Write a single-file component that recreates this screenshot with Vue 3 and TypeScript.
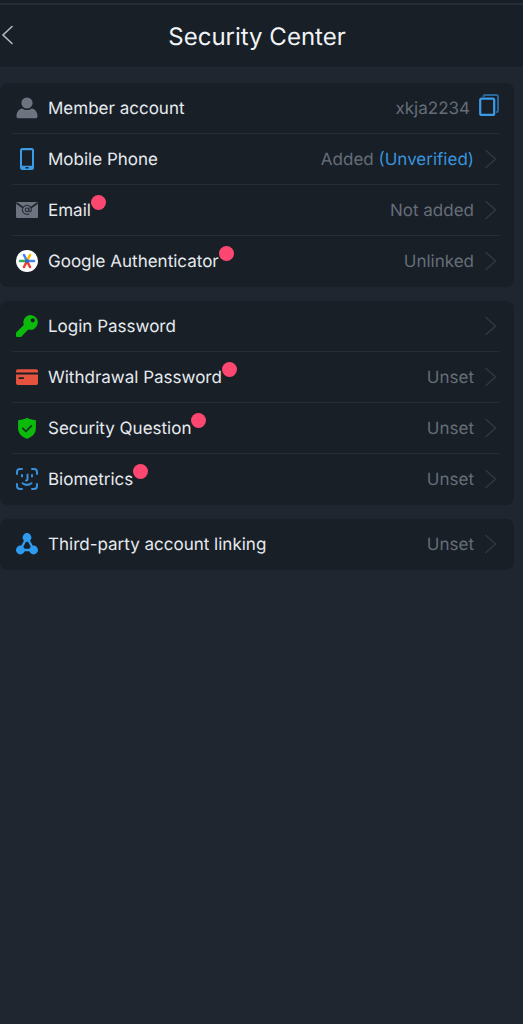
<script setup lang="ts">
type IconName = 'phone' | 'mail' | 'google' | 'key' | 'card' | 'shield' | 'face' | 'nodes'

interface Row {
  label: string
  icon: IconName
  value: string
  note?: string
  dot?: boolean
}

const account = 'xkja2234'

const accountRows: Row[] = [
  { label: 'Mobile Phone', icon: 'phone', value: 'Added', note: '(Unverified)' },
  { label: 'Email', icon: 'mail', value: 'Not added', dot: true },
  { label: 'Google Authenticator', icon: 'google', value: 'Unlinked', dot: true },
]

const groups: Row[][] = [
  accountRows,
  [
    { label: 'Login Password', icon: 'key', value: '' },
    { label: 'Withdrawal Password', icon: 'card', value: 'Unset', dot: true },
    { label: 'Security Question', icon: 'shield', value: 'Unset', dot: true },
    { label: 'Biometrics', icon: 'face', value: 'Unset', dot: true },
  ],
  [{ label: 'Third-party account linking', icon: 'nodes', value: 'Unset' }],
]

function copyAccount() {
  navigator.clipboard?.writeText(account)
}
</script>

<template>
  <div class="page">
    <header class="header">
      <button class="back" type="button" aria-label="Back">
        <svg viewBox="0 0 12 20" width="12" height="20">
          <path d="M11 1.500 2 10l9 8.500" fill="none" stroke="#b4bac1" stroke-width="1.600" stroke-linecap="round" />
        </svg>
      </button>
      <h1 class="title">Security Center</h1>
    </header>

    <main class="groups">
      <section v-for="(rows, index) in groups" :key="index" class="card">
        <div v-if="index === 0" class="row">
          <svg class="icon" viewBox="0 0 22 22">
            <circle cx="11" cy="6" r="5.600" fill="#6d7480" />
            <path d="M.5 19.500C.5 15 3 12.200 6.300 11.600c2.800 2 6.600 2 9.400 0 3.300.6 5.800 3.400 5.800 7.900 0 1.200-.7 1.800-1.800 1.800H2.300C1.200 21.300.5 20.700.5 19.500Z" fill="#6d7480" />
          </svg>
          <span class="label">Member account</span>
          <span class="value">{{ account }}</span>
          <button class="copy" type="button" aria-label="Copy member account" @click="copyAccount">
            <svg viewBox="0 0 20 22" width="20" height="22">
              <path d="M4.500 3V2.500Q4.500 1 6 1h11.500Q19 1 19 2.500v14q0 1.500-1.500 1.500H17" fill="none" stroke="#28659b" stroke-width="2" />
              <rect x="1.200" y="4.700" width="14" height="16.200" rx="1.500" fill="none" stroke="#3a9be8" stroke-width="2.200" />
            </svg>
          </button>
        </div>

        <button v-for="row in rows" :key="row.label" class="row" type="button">
          <svg class="icon" viewBox="0 0 22 22">
            <template v-if="row.icon === 'phone'">
              <path fill-rule="evenodd" d="M6.500 0h9Q18 0 18 2.500v17q0 2.500-2.500 2.500h-9Q4 22 4 19.500v-17Q4 0 6.500 0ZM6 2.300v15.500h10V2.300ZM9.500 19v1.500h3V19Z" fill="#3a9be8" />
            </template>
            <template v-else-if="row.icon === 'mail'">
              <rect x="0" y="3" width="22" height="16" rx="1.200" fill="#6d7480" />
              <path d="M.5 4 7 8.600M21.500 4 15 8.600" stroke="#181f27" stroke-width="1.600" />
              <circle cx="11" cy="10.800" r="1.800" fill="none" stroke="#252d38" stroke-width="1.100" />
              <path d="M12.900 8.800v2.700q0 1.400 1.200 1.300 1.300-.3 1.300-2.300A4.500 4.500 0 1 0 13.200 14.700" fill="none" stroke="#252d38" stroke-width="1.100" />
            </template>
            <template v-else-if="row.icon === 'google'">
              <circle cx="11" cy="11" r="11" fill="#fff" />
              <g stroke-width="2.600" stroke-linecap="round" fill="none">
                <path d="M11 11H4" stroke="#34a853" />
                <path d="M11 11h7" stroke="#4285f4" />
                <path d="M11 11 8 5" stroke="#4285f4" />
                <path d="M11 11l3-6" stroke="#fbbc04" />
                <path d="M11 11l-3 6M11 11l3 6" stroke="#ea4335" />
              </g>
              <circle cx="11" cy="11" r="1.900" fill="#2c65c8" />
            </template>
            <template v-else-if="row.icon === 'key'">
              <path fill-rule="evenodd" d="M14.500 0a7.400 7.400 0 1 1-2.200 14.500L5.500 21.400Q5 22 4 22H1.200Q0 22 0 20.800v-2.300q0-.8.600-1.400l7.200-7.200A7.400 7.400 0 0 1 14.500 0ZM16.700 3.200a2.100 2.100 0 1 0 0 4.200 2.100 2.100 0 0 0 0-4.200Z" fill="#0cba0c" />
            </template>
            <template v-else-if="row.icon === 'card'">
              <path d="M0 6.500V5q0-1.800 1.800-1.800h18.400Q22 3.200 22 5v1.500Z" fill="#e5533f" />
              <path fill-rule="evenodd" d="M0 8.500h22v8.700q0 1.800-1.800 1.800H1.800Q0 19 0 17.200ZM2.700 11.200v1.700h5.200v-1.700Z" fill="#e5533f" />
            </template>
            <template v-else-if="row.icon === 'shield'">
              <path d="M11 .8c2.500 1.400 5 2 8 2.200.6 0 .9.300.9.900v7.300c0 5.200-3.600 8.500-8.900 10.600-5.300-2.100-8.900-5.400-8.900-10.600V3.900c0-.6.300-.9.900-.9 3-.2 5.500-.8 8-2.200Z" fill="#0cba0c" />
              <path d="m6.800 11.300 3.100 3 5.500-5.500" fill="none" stroke="#12351c" stroke-width="1.700" stroke-linecap="round" stroke-linejoin="round" />
            </template>
            <template v-else-if="row.icon === 'face'">
              <g fill="none" stroke="#3a8fdb" stroke-width="2" stroke-linecap="round">
                <path d="M1 6V4q0-3 3-3h2M16 1h2q3 0 3 3v2M21 16v2q0 3-3 3h-2M6 21H4q-3 0-3-3v-2" />
                <path d="M6 7v1.600M16 7v1.600M11.500 6.500v4.700q0 1.300-1.500 1.300M6.500 15.200q4.500 3.400 9 0" />
              </g>
            </template>
            <template v-else>
              <path d="M11 4.500 4.200 17h13.600Z" fill="none" stroke="#2f9bf0" stroke-width="2.400" />
              <circle cx="11" cy="4.500" r="4.400" fill="#2f9bf0" />
              <circle cx="4.400" cy="17" r="4.400" fill="#2f9bf0" />
              <circle cx="17.600" cy="17" r="4.400" fill="#2f9bf0" />
            </template>
          </svg>
          <span class="label">{{ row.label }}<i v-if="row.dot" class="dot"></i></span>
          <span class="value">{{ row.value }} <span v-if="row.note" class="note">{{ row.note }}</span></span>
          <svg class="chevron" viewBox="0 0 12 20" width="12" height="20">
            <path d="M1 1.500 10.500 10 1 18.500" fill="none" stroke="#2f3741" stroke-width="1.600" stroke-linecap="round" />
          </svg>
        </button>
      </section>
    </main>
  </div>
</template>

<style>
html,
body {
  background: #1f262f;
}
</style>

<style scoped>
.page {
  min-height: 100vh;
  box-sizing: border-box;
  background: #1f262f;
  color: #e6eaee;
  font-family: Inter, "Liberation Sans", sans-serif;
  font-size: 17px;
  line-height: 24px;
  text-rendering: geometricPrecision;
}

button {
  margin: 0;
  padding: 0;
  border: 0;
  background: none;
  color: inherit;
  font: inherit;
  text-align: left;
  text-rendering: inherit;
  cursor: pointer;
}

.header {
  display: grid;
  grid-template-columns: 24px 1fr 24px;
  align-items: center;
  height: 68px;
  box-sizing: border-box;
  padding: 0 10px 0 1px;
  border-top: 1px solid #181f27;
  background: #181f27;
  box-shadow: inset 0 2px #181f27, inset 0 4px #262d36, inset 0 -1px #222932;
}

.back {
  display: flex;
  align-items: center;
  height: 40px;
}

.title {
  margin: 0;
  padding-top: 4px;
  font-size: 24px;
  font-weight: 400;
  line-height: 32px;
  text-align: center;
  color: #f1f4f6;
}

.groups {
  display: flex;
  flex-direction: column;
  gap: 14px;
  padding: 15px 9px 24px 0;
}

.card {
  padding: 0 15px 0 12px;
  border-radius: 8px;
  background: #181f27;
}

.row {
  display: flex;
  align-items: center;
  width: 100%;
  height: 51px;
  box-sizing: border-box;
  padding: 0 0 0 4px;
  border-bottom: 1px solid #262d36;
}

.row:last-child {
  border-bottom-color: transparent;
}

.icon {
  flex: none;
  width: 22px;
  height: 22px;
  margin-right: 10px;
}

.label,
.value {
  padding-top: 2px;
  white-space: nowrap;
}

.label {
  position: relative;
}

.dot {
  position: absolute;
  left: 100%;
  top: -2px;
  width: 15px;
  height: 15px;
  border-radius: 50%;
  background: #fc4770;
}

.value {
  margin-left: auto;
  color: #666d77;
}

.note {
  color: #3a93dc;
}

.chevron {
  flex: none;
  margin: 0 2px 0 11px;
}

.copy {
  display: flex;
  margin: 0 0 6px 9px;
}
</style>
